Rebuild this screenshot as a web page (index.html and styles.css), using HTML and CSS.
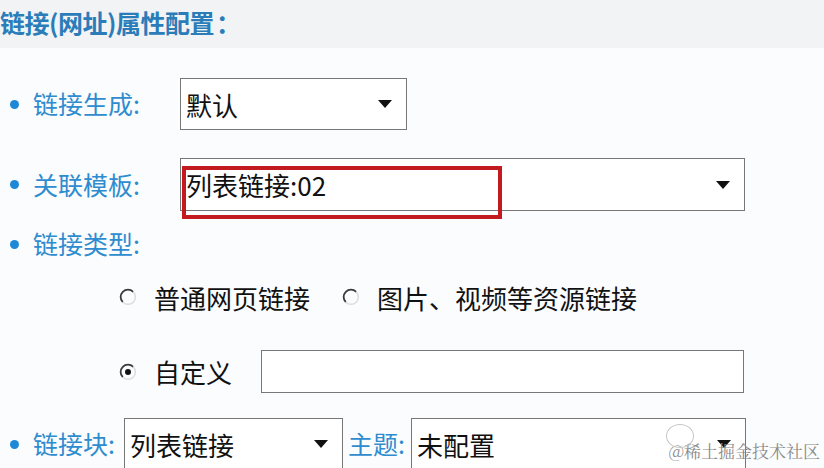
FILE: index.html
```html
<!DOCTYPE html>
<html lang="zh-CN">
<head>
<meta charset="utf-8">
<title>链接(网址)属性配置</title>
<link rel="stylesheet" href="styles.css">
</head>
<body>
<div class="page">
  <div class="header"><span class="title">链接(网址)属性配置<span class="colon">：</span></span></div>
  <div class="form">
    <div class="row r1">
      <span class="dot"></span><span class="label">链接生成:</span>
      <div class="select w1"><span class="val">默认</span><span class="arrow"></span></div>
    </div>
    <div class="row r2">
      <span class="dot"></span><span class="label">关联模板:</span>
      <div class="select w2"><span class="val">列表链接:02</span><span class="arrow"></span><span class="highlight"></span></div>
    </div>
    <div class="row r3">
      <span class="dot"></span><span class="label">链接类型:</span>
    </div>
    <div class="row r4 radios">
      <span class="radio"><svg width="18" height="18" viewBox="0 0 18 18"><path d="M14.2 3.8A7.2 7.2 0 1 0 3.8 14.2" fill="none" stroke="#3a3a3a" stroke-width="1.8"/><path d="M3.8 14.2A7.2 7.2 0 0 0 14.2 3.8" fill="none" stroke="#dcdcdc" stroke-width="1.5"/></svg></span>
      <span class="opt">普通网页链接</span>
      <span class="radio second"><svg width="18" height="18" viewBox="0 0 18 18"><path d="M14.2 3.8A7.2 7.2 0 1 0 3.8 14.2" fill="none" stroke="#3a3a3a" stroke-width="1.8"/><path d="M3.8 14.2A7.2 7.2 0 0 0 14.2 3.8" fill="none" stroke="#dcdcdc" stroke-width="1.5"/></svg></span>
      <span class="opt">图片、视频等资源链接</span>
    </div>
    <div class="row r5 radios">
      <span class="radio"><svg width="18" height="18" viewBox="0 0 18 18"><path d="M14.2 3.8A7.2 7.2 0 1 0 3.8 14.2" fill="none" stroke="#3a3a3a" stroke-width="1.8"/><path d="M3.8 14.2A7.2 7.2 0 0 0 14.2 3.8" fill="none" stroke="#dcdcdc" stroke-width="1.5"/><circle cx="9" cy="9" r="3" fill="#111"/></svg></span>
      <span class="opt custom">自定义</span>
      <div class="input"></div>
    </div>
    <div class="row r6">
      <span class="dot"></span><span class="label short">链接块:</span>
      <div class="select w3"><span class="val">列表链接</span><span class="arrow"></span></div>
      <span class="label theme">主题:</span>
      <div class="select w4"><span class="val">未配置</span><span class="arrow"></span></div>
    </div>
  </div>
  <div class="watermark"><span class="wm-logo"></span>@稀土掘金技术社区</div>
</div>
</body>
</html>
```
FILE: styles.css
```css
html, body {
  margin: 0;
  padding: 0;
  background: #fbfcfd;
}
.page {
  position: relative;
  width: 824px;
  height: 468px;
  overflow: hidden;
  font-family: "Noto Sans CJK SC", "Noto Sans", sans-serif;
}
.header {
  height: 48px;
  background: #f2f3f4;
  display: flex;
  align-items: center;
}
.title {
  margin-left: 0;
  margin-top: -4px;
  font-size: 25px;
  font-weight: bold;
  color: #2a7db9;
  letter-spacing: -0.5px;
}
.colon {
  font-family: "Noto Sans CJK TC", "Noto Sans CJK SC", sans-serif;
  margin-left: 2px;
}
.form {
  display: flex;
  flex-direction: column;
}
.row {
  display: flex;
  align-items: center;
}
.r1 { margin-top: 30px; height: 52px; }
.r2 { margin-top: 28px; height: 53px; }
.r3 { margin-top: 13px; height: 40px; }
.r4 { margin-top: 13px; height: 40px; }
.r5 { margin-top: 33px; height: 43px; }
.r6 { margin-top: 25px; height: 52px; }
.dot {
  width: 9px;
  height: 9px;
  border-radius: 50%;
  background: #1e88d6;
  margin-left: 10px;
  margin-right: 14px;
  flex: none;
}
.label {
  width: 147px;
  font-size: 25px;
  color: #2e8ccf;
  flex: none;
  margin-top: -2px;
}
.label.short {
  width: 91px;
}
.label.theme {
  width: auto;
  margin-left: 5px;
  margin-right: 6px;
}
.select {
  position: relative;
  height: 100%;
  box-sizing: border-box;
  border: 1px solid #777;
  background: #fff;
  display: flex;
  align-items: center;
  flex: none;
}
.w1 { width: 227px; }
.w2 { width: 565px; }
.w3 { width: 219px; }
.w4 { width: 335px; }
.val {
  padding-left: 5px;
  font-size: 26px;
  color: #111;
  flex: 1;
}
.arrow {
  width: 0;
  height: 0;
  border-left: 7px solid transparent;
  border-right: 7px solid transparent;
  border-top: 8px solid #111;
  margin-right: 14px;
}
.highlight {
  position: absolute;
  left: 1px;
  top: 7px;
  width: 320px;
  height: 53px;
  box-sizing: border-box;
  border: 4px solid #c21a1f;
}
.radios {
  padding-left: 119px;
}
.radio {
  width: 18px;
  height: 18px;
  display: flex;
  flex: none;
}
.radio.second {
  margin-left: 32px;
}
.opt {
  font-size: 26px;
  color: #111;
  margin-left: 17px;
}
.opt.custom {
  margin-right: 29px;
}
.input {
  width: 483px;
  height: 100%;
  box-sizing: border-box;
  border: 1px solid #777;
  background: #fff;
}
.watermark {
  position: absolute;
  right: 4px;
  bottom: 5px;
  font-family: "Noto Serif CJK SC", "Noto Sans CJK SC", serif;
  font-size: 17px;
  color: #8a8a8a;
  display: flex;
  align-items: center;
}
.wm-logo {
  position: absolute;
  left: -2px;
  top: -14px;
  width: 26px;
  height: 22px;
  border: 1px solid #c8c8c8;
  border-radius: 50%;
}
```
